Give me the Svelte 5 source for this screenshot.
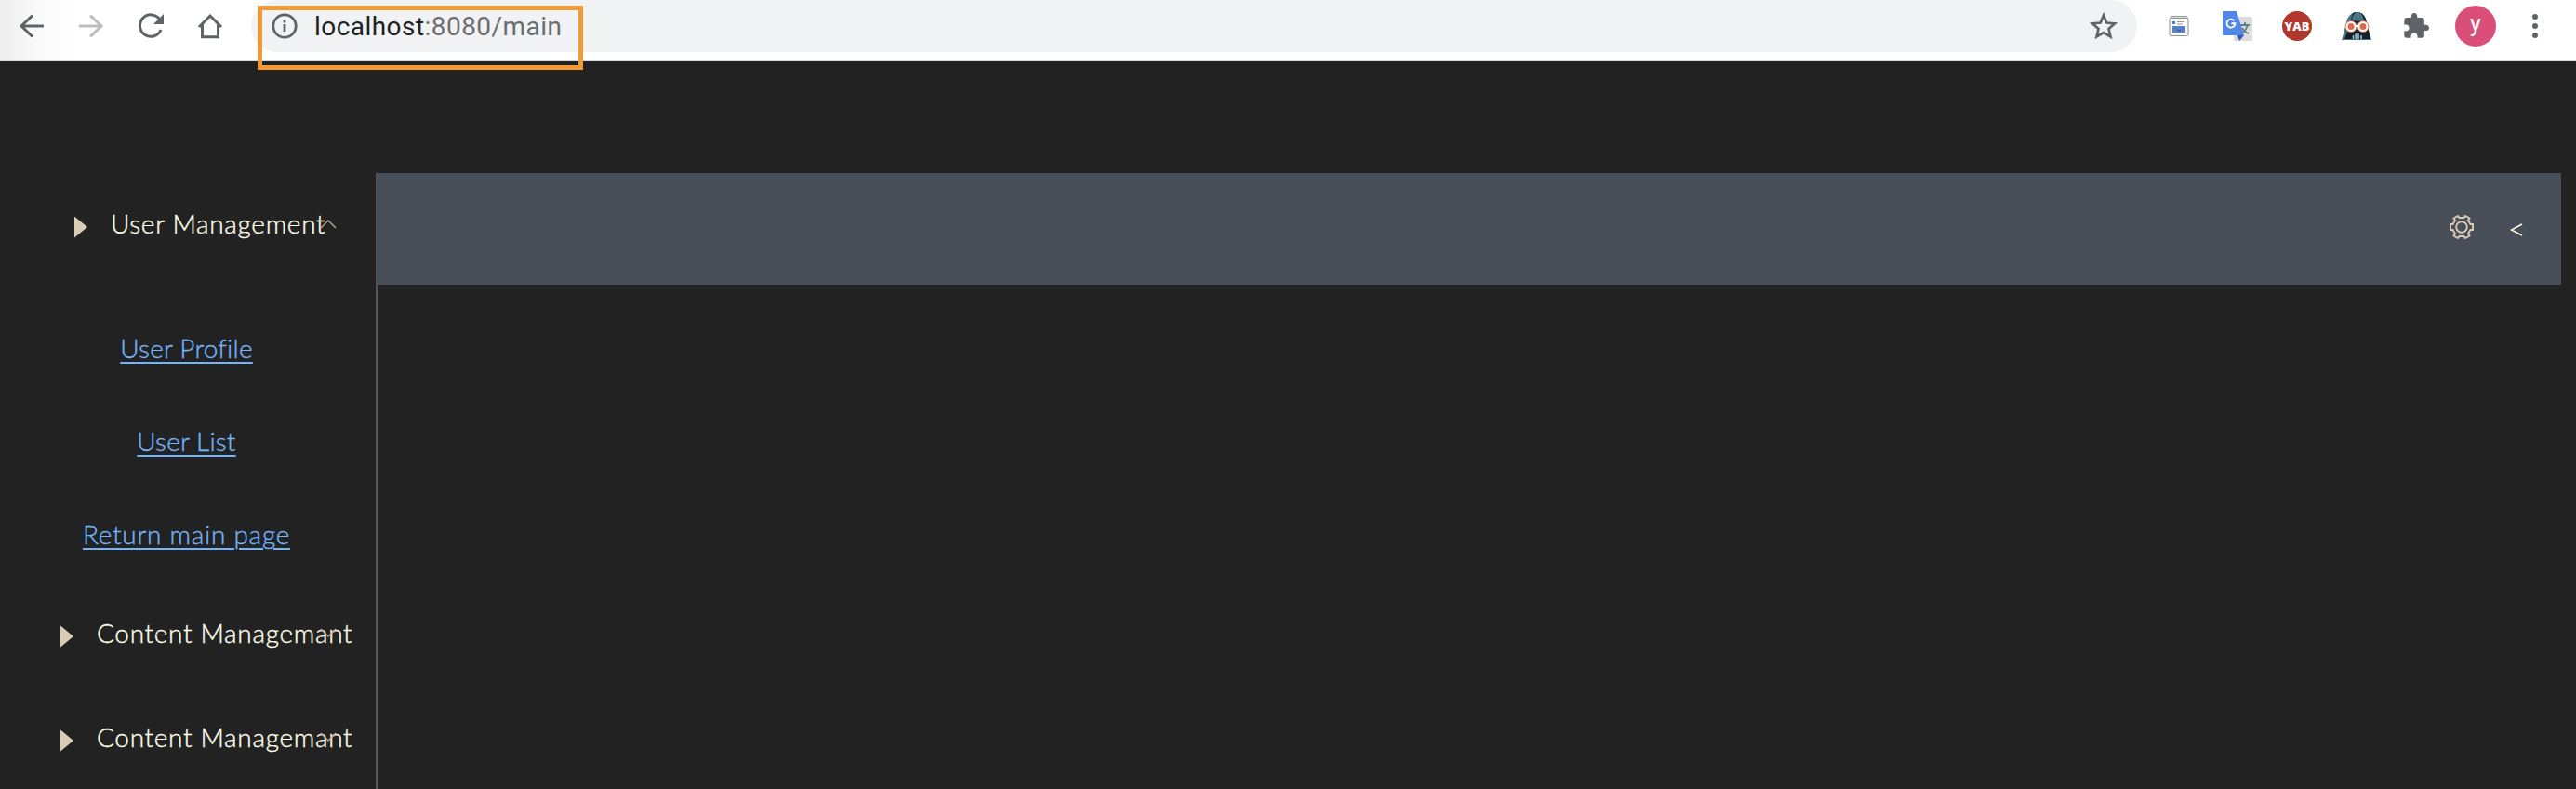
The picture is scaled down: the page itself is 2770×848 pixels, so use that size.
<script>
  const links = [
    { text: 'User Profile', spacing: 0.22 },
    { text: 'User List', spacing: 0.15 },
    { text: 'Return main page', spacing: 0.72 },
  ];
  const more = ['Content Managemant', 'Content Managemant'];
</script>

<div class="screen">
  <header class="toolbar">
    <nav class="nav">
      <svg viewBox="0 0 26 26"><path d="M26 13H2M14 1.500 2 13l12 11.500" /></svg>
      <svg viewBox="0 0 26 26" class="off"><path d="M0 13h24M12 1.500 24 13 12 24.500" /></svg>
      <svg viewBox="0 0 26 26" class="reload"><path d="M22.500 5.500A11.700 11.700 0 1 0 24 17" /><path class="fill" d="M27 0v11H16z" /></svg>
      <svg viewBox="0 0 26 26"><path d="M1 14 13 2l12 12M4.500 11v13.700h17V11" /></svg>
    </nav>
    <div class="address">
      <svg class="info" viewBox="0 0 28 28"><circle cx="14" cy="14" r="12.200" /><path d="M14 12v8M14 7.500v3" /></svg>
      <span class="url"><b>localhost</b>:8080/main</span>
      <svg class="star" viewBox="0 0 30 30"><path d="M15 3.500l3.400 8 8.600.8-6.500 5.700 2 8.500L15 22l-7.500 4.500 2-8.500L3 12.300l8.600-.8z" /></svg>
      <div class="highlight"></div>
    </div>
    <div class="extensions">
      <svg width="22" height="22" viewBox="0 0 22 22">
        <rect x="2" y=".5" width="18" height="4" rx="1" fill="#ddd" stroke="#999" />
        <rect x="1" y="2.500" width="20" height="19" rx="1.500" fill="#fafafa" stroke="#8e9098" />
        <path d="M4 6h3v3H4z" fill="#4c7ccc" /><path d="M9 6.500h8M9 9h6" stroke="#999" />
        <path d="M4 11h14v7H4z" fill="#5a80cc" /><path d="M7 13v1M15 13v1M9 15q2 2 4 0" stroke="#334f8c" fill="none" />
      </svg>
      <svg width="32" height="32" viewBox="0 0 32 32">
        <rect x="12" y="6" width="20" height="26" rx="1.500" fill="#dcdcdc" />
        <path d="M19 15h10M24 12v3M27 15q-2 6-7 9M21 18q3 5 7 6" stroke="#607d8b" stroke-width="1.800" fill="none" />
        <path d="M16 26h7l-5 6z" fill="#3555b8" /><path d="M1 0h14l8 26H1q-1 0-1-1V1q0-1 1-1z" fill="#5088e8" />
        <path d="M12.500 10.300A4.500 4.500 0 1 0 13.500 13.300H9.500" fill="none" stroke="#fff" stroke-width="1.900" />
      </svg>
      <span class="yab">YAB</span>
      <svg width="32" height="30" viewBox="0 0 32 30">
        <path d="M0 30 5 12C6 4 11 0 16.500 0S26 4 27 12l5 18z" fill="#457586" />
        <path d="M12 1q4-2 9 0 5 3 6 11l4 17H3l5-13z" fill="#172027" /><path d="M19 0q4 3 5 9l-7 1-6-2q1-6 5-8" fill="#457586" />
        <g fill="#d96a50" stroke="#d96a50" stroke-width="3.500"><circle cx="10" cy="15.500" r="4.700" /><circle cx="23" cy="15.500" r="4.700" /></g>
        <g fill="#d96a50" stroke="#fff" stroke-width="2"><circle cx="10" cy="15.500" r="4.500" /><circle cx="23" cy="15.500" r="4.500" /><path d="M14.500 15h4" /></g>
        <path d="M12.500 25v4M15.200 23v6M18 23v6M21 25v4" stroke="#8bc5dc" stroke-width="1.600" />
      </svg>
      <svg width="28" height="28" viewBox="1 1 22 22"><path fill="#5f6368" d="M20.500 11H19V7c0-1.100-.9-2-2-2h-4V3.500C13 2.120 11.880 1 10.500 1S8 2.120 8 3.500V5H4c-1.100 0-1.990.9-1.990 2v3.800H3.500c1.490 0 2.700 1.210 2.700 2.700s-1.210 2.700-2.700 2.700H2V20c0 1.100.9 2 2 2h3.800v-1.500c0-1.490 1.210-2.700 2.700-2.700s2.700 1.210 2.700 2.700V22H17c1.100 0 2-.9 2-2v-4h1.500c1.380 0 2.500-1.120 2.500-2.500S21.880 11 20.500 11z" /></svg>
      <span class="avatar">y</span>
      <span class="dots"><i></i><i></i><i></i></span>
    </div>
  </header>

  <main class="page">
    <aside class="sidebar">
      <div class="group first">
        <i class="arrow"></i><span class="label">User Management</span>
        <svg class="chevron" viewBox="0 0 18 10"><path d="M1 9l8-8 8 8" /></svg>
      </div>
      <ul>
        {#each links as link, i}
          <li><a href="#{i}" style="letter-spacing: {link.spacing}px">{link.text}</a></li>
        {/each}
      </ul>
      {#each more as item}
        <div class="group">
          <i class="arrow"></i><span class="label">{item}</span>
          <svg class="chevron" viewBox="0 0 18 10"><path d="M1 1l8 8 8-8" /></svg>
        </div>
      {/each}
    </aside>
    <section class="content">
      <div class="bar">
        <svg class="gear" viewBox="0 0 26 26"><path d="M1 10h2.500L6 6 4.500 3.500 9 1l1.500 2h5L17 1l4.500 2.500L20 6l2.500 4H25v6h-2.500L20 20l1.500 2.500L17 25l-1.500-2h-5L9 25l-4.500-2.500L6 20l-2.500-4H1z" /><circle cx="13" cy="13" r="5.800" /></svg>
        <svg class="collapse" viewBox="0 0 14 14"><path d="M13 1 1.500 7 13 13" /></svg>
      </div>
    </section>
  </main>
</div>

<style>
  :global(body) { background: #222; overflow: hidden; }
  .screen { width: 2770px; height: 848px; overflow: hidden; background: #222; display: flex; flex-direction: column; }
  .toolbar { height: 64px; flex: none; border-bottom: 2px solid #d8d9df; background: linear-gradient(90deg, #ededed 0, #fbfbfb 45px, #fff 85px); display: flex; align-items: flex-start; }
  .nav { width: 270px; flex: none; box-sizing: border-box; padding: 15px 0 0 21px; display: flex; gap: 38px; }
  .nav svg { width: 26px; height: 26px; overflow: visible; fill: none; stroke: #5f6368; stroke-width: 3; }
  .nav .off { stroke: #bdbdbd; }
  .nav .fill { fill: #5f6368; stroke: none; }
  .address { position: relative; width: 2028px; height: 56px; flex: none; box-sizing: border-box; border-radius: 28px; background: #f1f2f4; display: flex; align-items: center; padding: 0 21px 0 22px; }
  .info { width: 28px; height: 28px; fill: none; stroke: #5f6368; stroke-width: 2.800; }
  .url { font: 28px Roboto, sans-serif; color: #6a6d70; margin-left: 18px; white-space: nowrap; letter-spacing: .45px; }
  .url b { font-weight: 400; color: #202124; }
  .star { width: 30px; height: 30px; margin-left: auto; fill: none; stroke: #5f6368; stroke-width: 2.700; }
  .highlight { position: absolute; left: 7px; top: 6px; width: 350px; height: 69px; box-sizing: border-box; border: 5px solid #f39a35; z-index: 2; }
  .extensions { height: 56px; display: flex; align-items: center; padding-left: 34px; }
  .yab { width: 32px; height: 32px; border-radius: 50%; background: #b2372c; color: #fff; font: 800 13px/33px "Open Sans", sans-serif; text-align: center; }
  .extensions > :nth-child(2) { margin-left: 36px; }
  .extensions > :nth-child(3) { margin-left: 32px; }
  .extensions > :nth-child(4) { margin-left: 32px; }
  .extensions > :nth-child(5) { margin-left: 34px; }
  .avatar { width: 44px; height: 44px; border-radius: 50%; background: #d94f7a; color: #fff; font: 25px/40px Roboto, sans-serif; text-align: center; margin-left: 28px; }
  .dots { display: flex; flex-direction: column; gap: 4px; margin-left: 39px; }
  .dots i { width: 6px; height: 6px; border-radius: 50%; background: #5f6368; }
  .page { flex: 1; padding: 120px 16px 0 54px; display: flex; background: #222; }
  .sidebar { width: 350px; flex: none; font: 300 28px/40px Lato, sans-serif; color: #ffffeb; -webkit-text-stroke: .35px currentColor; }
  .group { position: relative; height: 112px; display: flex; align-items: center; padding-left: 11px; box-sizing: border-box; }
  .group.first { height: 110px; padding-left: 26px; }
  .arrow { width: 14px; height: 23px; background: #dacbb5; clip-path: polygon(0 0, 100% 50%, 0 100%); margin-top: 6px; }
  .label { margin: -3px 0 0 25px; white-space: nowrap; letter-spacing: .68px; }
  .chevron { position: absolute; left: 290px; top: 50px; width: 18px; height: 10px; fill: none; stroke: #b8ab98; stroke-width: 1.400; }
  ul { list-style: none; margin: 28px 0 1px; padding: 0; width: 293px; }
  li { height: 100px; display: flex; align-items: center; justify-content: center; }
  a { color: #74b5fa; text-underline-offset: 4px; text-decoration-thickness: 2px; white-space: nowrap; }
  .content { flex: 1; border-left: 2px solid #555; }
  .bar { height: 120px; margin-left: -1px; background: #494f59; display: flex; align-items: center; justify-content: flex-end; padding-right: 41px; }
  .gear { width: 26px; height: 26px; fill: none; stroke: #dacbb5; stroke-width: 1.900; margin-top: -5px; }
  .collapse { width: 14px; height: 14px; fill: none; stroke: #ffffeb; stroke-width: 1.500; margin: 1px 0 0 39px; }
</style>
